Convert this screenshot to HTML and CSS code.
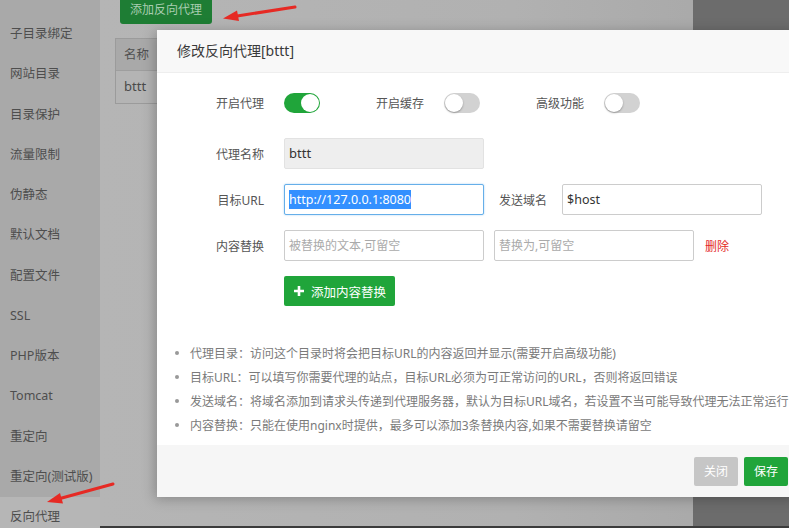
FILE: index.html
```html
<!DOCTYPE html>
<html lang="zh-CN">
<head>
<meta charset="utf-8">
<title>修改反向代理</title>
<link rel="stylesheet" href="styles.css">
</head>
<body>
<div class="page">
  <aside class="sidebar">
    <div class="nav-item">子目录绑定</div>
    <div class="nav-item">网站目录</div>
    <div class="nav-item">目录保护</div>
    <div class="nav-item">流量限制</div>
    <div class="nav-item">伪静态</div>
    <div class="nav-item">默认文档</div>
    <div class="nav-item">配置文件</div>
    <div class="nav-item">SSL</div>
    <div class="nav-item">PHP版本</div>
    <div class="nav-item">Tomcat</div>
    <div class="nav-item">重定向</div>
    <div class="nav-item">重定向(测试版)</div>
    <div class="nav-item active">反向代理</div>
  </aside>
  <main class="content">
    <div class="btn-add">添加反向代理</div>
    <div class="tbl">
      <div class="tbl-head">名称</div>
      <div class="tbl-row">bttt</div>
    </div>
  </main>
  <div class="dim-right"></div>
</div>

<div class="modal">
  <div class="modal-title">修改反向代理[bttt]</div>
  <div class="modal-body">
    <div class="switch-row">
      <div class="switch-group">
        <span class="label">开启代理</span>
        <span class="switch on"><span class="knob"></span></span>
      </div>
      <div class="switch-group">
        <span class="label">开启缓存</span>
        <span class="switch"><span class="knob"></span></span>
      </div>
      <div class="switch-group">
        <span class="label">高级功能</span>
        <span class="switch"><span class="knob"></span></span>
      </div>
    </div>

    <div class="form-row first">
      <span class="label">代理名称</span>
      <div class="input disabled">bttt</div>
    </div>
    <div class="form-row">
      <span class="label">目标URL</span>
      <div class="input focus"><span class="sel">http://127.0.0.1:8080</span></div>
      <span class="label-inline">发送域名</span>
      <div class="input">$host</div>
    </div>
    <div class="form-row">
      <span class="label">内容替换</span>
      <div class="input placeholder">被替换的文本,可留空</div>
      <div class="input placeholder second">替换为,可留空</div>
      <span class="del">删除</span>
    </div>
    <div class="form-row">
      <span class="label"></span>
      <div class="btn-green">
        <svg class="plus" width="10" height="10" viewBox="0 0 10 10"><path d="M5 0v10M0 5h10" stroke="#fff" stroke-width="2.6"/></svg>
        <span>添加内容替换</span>
      </div>
    </div>

    <ul class="notes">
      <li>代理目录：访问这个目录时将会把目标URL的内容返回并显示(需要开启高级功能)</li>
      <li>目标URL：可以填写你需要代理的站点，目标URL必须为可正常访问的URL，否则将返回错误</li>
      <li>发送域名：将域名添加到请求头传递到代理服务器，默认为目标URL域名，若设置不当可能导致代理无法正常运行</li>
      <li>内容替换：只能在使用nginx时提供，最多可以添加3条替换内容,如果不需要替换请留空</li>
    </ul>
  </div>
  <div class="modal-foot">
    <span class="btn btn-gray">关闭</span>
    <span class="btn btn-save">保存</span>
  </div>
</div>

<svg class="arrows" width="789" height="528" viewBox="0 0 789 528">
  <line x1="295" y1="7" x2="234" y2="16.5" stroke="#e62a24" stroke-width="3" stroke-linecap="round"/>
  <polygon points="223,18.5 237,10.5 239,21" fill="#e62a24"/>
  <line x1="113" y1="484" x2="60" y2="498.5" stroke="#e62a24" stroke-width="3" stroke-linecap="round"/>
  <polygon points="47,502 60,493 63,503.5" fill="#e62a24"/>
</svg>
</body>
</html>
```

FILE: styles.css
```css
* { box-sizing: border-box; }
html, body { margin: 0; padding: 0; }
body {
  width: 789px;
  height: 528px;
  overflow: hidden;
  position: relative;
  font-family: "Noto Sans", "Noto Sans CJK SC", sans-serif;
  font-size: 12px;
  color: #333;
  background: #b0b0b0;
}

.page {
  display: flex;
  height: 528px;
  border-bottom: 2px solid #3b3b3b;
}

.sidebar {
  width: 100px;
  flex: none;
  background: #a9a9a9;
  padding-top: 14px;
}
.nav-item {
  height: 40.25px;
  line-height: 40px;
  padding-left: 10px;
  font-size: 12.5px;
  color: #4e4e4e;
  white-space: nowrap;
}
.nav-item.active {
  background: #b6b6b6;
}

.content {
  flex: 1;
  padding-left: 15px;
  background: linear-gradient(to right, #b5b5b5 0%, #b1b1b1 60%, #a6a6a6 100%);
}
.btn-add {
  display: inline-block;
  margin-left: 5px;
  height: 24px;
  padding: 0 10px 4px;
  line-height: 20px;
  background: #1e7d34;
  color: #a9cdb1;
  font-size: 12px;
  border-radius: 0 0 3px 3px;
}
.tbl {
  margin-top: 14px;
  border: 1px solid #9b9b9b;
  width: 200px;
}
.tbl-head {
  height: 32px;
  line-height: 31px;
  padding-left: 8px;
  background: #a9a9a9;
  border-bottom: 1px solid #9e9e9e;
  color: #505050;
  font-size: 12.5px;
}
.tbl-row {
  height: 32px;
  line-height: 31px;
  padding-left: 8px;
  background: #b4b4b4;
  color: #4a4a4a;
  font-size: 13px;
}

.dim-right {
  position: absolute;
  left: 693px;
  top: 0;
  width: 96px;
  height: 526px;
  background: #6c6c6c;
}

.modal {
  position: absolute;
  left: 157px;
  top: 30px;
  width: 640px;
  height: 467px;
  background: #fff;
  box-shadow: -2px 2px 12px rgba(0, 0, 0, 0.25);
  display: flex;
  flex-direction: column;
}
.modal-title {
  height: 43px;
  line-height: 42px;
  padding-left: 20px;
  font-size: 14px;
  color: #3a3a3a;
  background: #f8f8f8;
  border-bottom: 1px solid #eee;
}
.modal-body {
  flex: 1;
  padding: 20px 0 0 20px;
}

.switch-row {
  display: flex;
  height: 20px;
  align-items: center;
}
.switch-group {
  width: 160px;
  display: flex;
  align-items: center;
}
.label {
  width: 87px;
  margin-right: 20px;
  text-align: right;
  color: #555;
  font-size: 12px;
  flex: none;
}
.switch {
  width: 36px;
  height: 20px;
  border-radius: 10px;
  background: #d2d2d2;
  position: relative;
  display: block;
}
.switch .knob {
  position: absolute;
  top: 1px;
  left: 1px;
  width: 18px;
  height: 18px;
  border-radius: 50%;
  background: #fff;
  box-shadow: 0 1px 2px rgba(0, 0, 0, 0.3);
}
.switch.on { background: #20a53a; }
.switch.on .knob { left: 17px; box-shadow: none; }

.form-row {
  display: flex;
  align-items: center;
  margin-top: 15px;
}
.form-row.first { margin-top: 25px; }
.input {
  width: 200px;
  height: 31px;
  line-height: 29px;
  border: 1px solid #ccc;
  border-radius: 2px;
  padding: 0 4px;
  font-size: 12.5px;
  color: #333;
  background: #fff;
  white-space: nowrap;
  overflow: hidden;
}
.input.disabled {
  background: #eee;
  border-color: #e2e2e2;
  font-size: 13px;
}
.input.focus {
  border-color: #66afe9;
  box-shadow: 0 0 2px rgba(102, 175, 233, 0.6);
}
.input .sel {
  background: #3390ff;
  color: #fff;
  padding: 1px 0;
}
.input.placeholder { color: #aaa; font-size: 12px; }
.input.second { margin-left: 10px; }
.label-inline {
  margin: 0 15px;
  color: #555;
}
.del {
  margin-left: 11px;
  color: #e4281f;
}
.btn-green {
  width: 111px;
  height: 30px;
  background: #20a53a;
  border-radius: 2px;
  color: #fff;
  font-size: 12.5px;
  display: flex;
  align-items: center;
  padding-left: 10px;
  gap: 7px;
}
.plus { display: block; }

.notes {
  list-style: none;
  margin: 35px 0 0 -2px;
  padding: 0;
}
.notes li {
  display: flex;
  align-items: center;
  height: 24px;
  color: #7a7a7a;
  font-size: 12px;
  white-space: nowrap;
}
.notes li::before {
  content: "";
  width: 4px;
  height: 4px;
  border-radius: 50%;
  background: #999;
  margin-right: 11px;
  flex: none;
}

.modal-foot {
  height: 52px;
  background: #f6f6f6;
  display: flex;
  align-items: center;
  padding-left: 537px;
  gap: 6px;
}
.btn {
  width: 44px;
  height: 29px;
  line-height: 29px;
  text-align: center;
  color: #fff;
  border-radius: 2px;
  font-size: 12px;
}
.btn-gray { background: #c6c6c6; }
.btn-save { background: #20a53a; }

.arrows {
  position: absolute;
  left: 0;
  top: 0;
  pointer-events: none;
}
```
